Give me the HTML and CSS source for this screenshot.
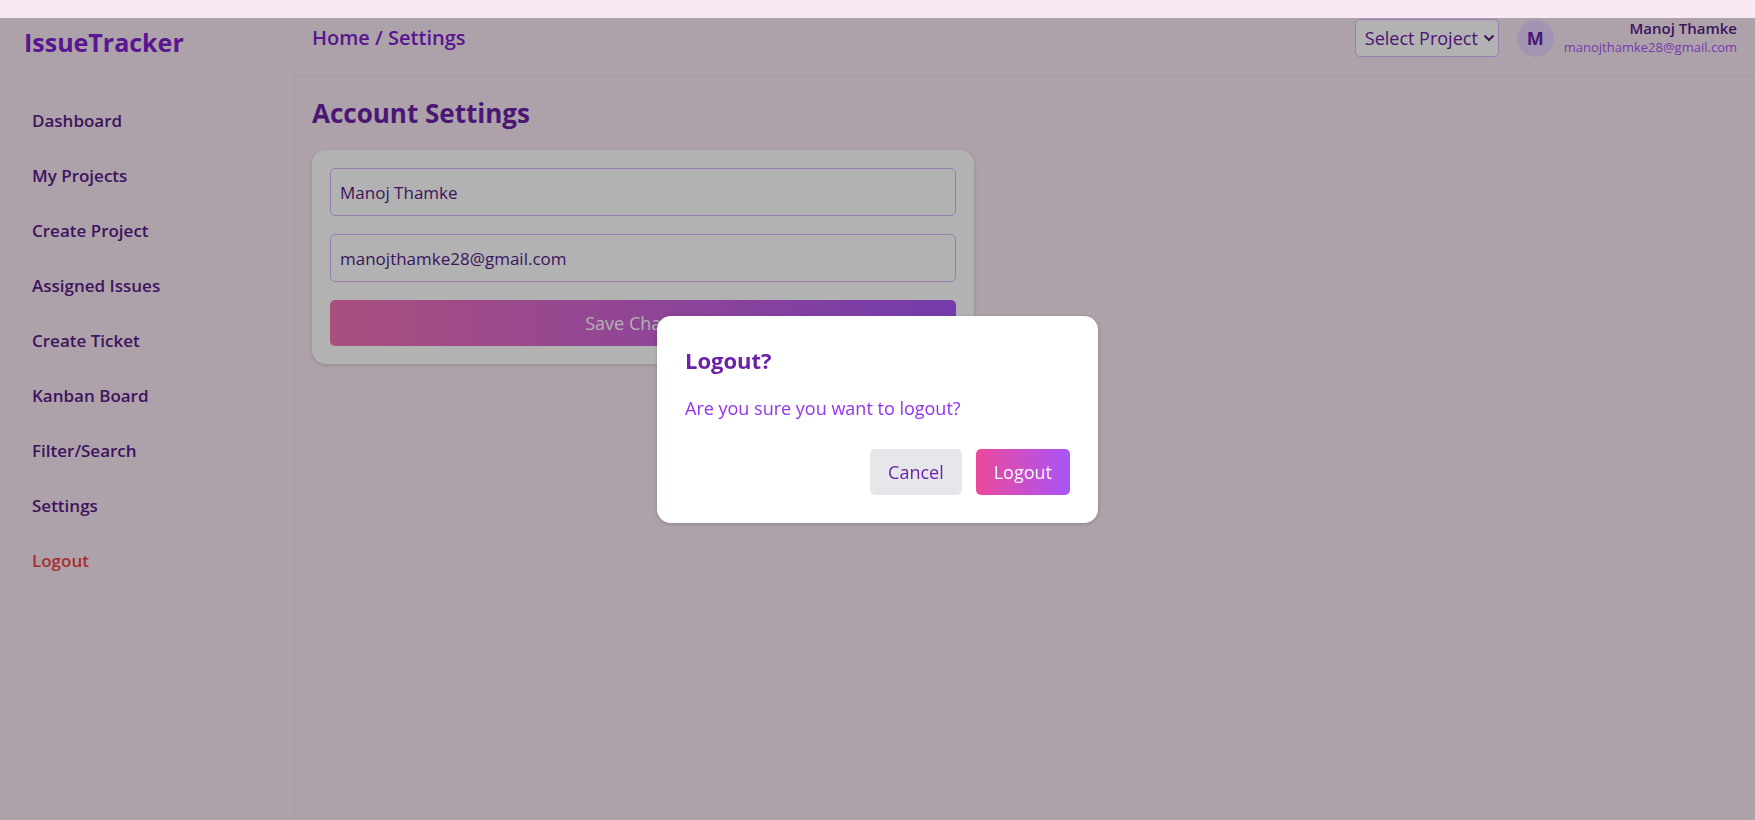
FILE: index.html
```html
<!DOCTYPE html>
<html lang="en">
<head>
<meta charset="utf-8">
<meta name="viewport" content="width=device-width, initial-scale=1">
<title>IssueTracker - Settings</title>
<link rel="stylesheet" href="styles.css">
</head>
<body>
<div class="app">
  <aside class="sidebar">
    <div class="brand">IssueTracker</div>
    <nav class="nav">
      <a href="#">Dashboard</a>
      <a href="#">My Projects</a>
      <a href="#">Create Project</a>
      <a href="#">Assigned Issues</a>
      <a href="#">Create Ticket</a>
      <a href="#">Kanban Board</a>
      <a href="#">Filter/Search</a>
      <a href="#">Settings</a>
      <button type="button" class="nav-logout">Logout</button>
    </nav>
  </aside>
  <div class="content">
    <header class="topbar">
      <div class="breadcrumb">Home / Settings</div>
      <div class="topbar-right">
        <div class="select-wrap">
          <select class="project-select" aria-label="Select Project">
            <option>Select Project</option>
          </select>
          <svg class="select-arrow" viewBox="0 0 12 8" aria-hidden="true"><path d="M1.500 1.500 6 6l4.500-4.500" fill="none" stroke="currentColor" stroke-width="2"/></svg>
        </div>
        <div class="user">
          <div class="avatar">M</div>
          <div class="user-text">
            <div class="user-name">Manoj Thamke</div>
            <div class="user-email">manojthamke28@gmail.com</div>
          </div>
        </div>
      </div>
    </header>
    <main class="main">
      <h1 class="page-title">Account Settings</h1>
      <form class="card">
        <input class="field" type="text" aria-label="Name" value="Manoj Thamke">
        <input class="field" type="email" aria-label="Email" value="manojthamke28@gmail.com">
        <button class="save" type="button">Save Changes</button>
      </form>
    </main>
  </div>
</div>
<div class="overlay">
  <div class="modal" role="dialog" aria-modal="true" aria-labelledby="logout-title">
    <h2 class="modal-title" id="logout-title">Logout?</h2>
    <p class="modal-text">Are you sure you want to logout?</p>
    <div class="modal-actions">
      <button type="button" class="btn btn-cancel">Cancel</button>
      <button type="button" class="btn btn-logout">Logout</button>
    </div>
  </div>
</div>
</body>
</html>
```
FILE: styles.css
```css
* {
  box-sizing: border-box;
  margin: 0;
}

body {
  padding-top: 18px;
  background: #fae8f4;
  color: #581c87;
  font-family: "Segoe UI", "Open Sans", "Noto Sans", sans-serif;
  font-size: 18px;
  line-height: 28px;
}

button,
input,
select {
  font: inherit;
}

.app {
  display: flex;
  min-height: calc(100vh - 18px);
}

.sidebar {
  flex: none;
  width: 294px;
  padding: 5px 14px 24px;
}

.brand {
  padding: 0 10px;
  margin-bottom: 37px;
  color: #7e22ce;
  font-size: 25px;
  font-weight: 700;
  line-height: 38px;
}

.nav {
  display: flex;
  flex-direction: column;
  gap: 9px;
}

.nav a,
.nav-logout {
  padding: 9px 18px;
  border: 0;
  background: none;
  color: #581c87;
  font-size: 17px;
  font-weight: 600;
  text-align: left;
  text-decoration: none;
}

.nav .nav-logout {
  color: #ef4444;
}

.content {
  display: flex;
  flex: 1;
  flex-direction: column;
  min-width: 0;
}

.topbar {
  display: flex;
  align-items: center;
  justify-content: space-between;
  padding: 1px 18px 18px;
  border-bottom: 1px solid #ecdbe8;
}

.breadcrumb {
  color: #7e22ce;
  font-size: 20px;
  font-weight: 600;
}

.topbar-right,
.user {
  display: flex;
  align-items: center;
}

.topbar-right {
  gap: 18px;
}

.user {
  gap: 10px;
}

.select-wrap {
  position: relative;
}

.project-select {
  appearance: none;
  display: block;
  width: 144px;
  height: 38px;
  padding: 0 9px;
  border: 1px solid #d8b4fe;
  border-radius: 5px;
  background: #fff;
  color: #6b21a8;
}

.select-arrow {
  position: absolute;
  top: 15px;
  right: 4px;
  width: 12px;
  height: 8px;
  color: #581c87;
  pointer-events: none;
}

.avatar {
  display: flex;
  align-items: center;
  justify-content: center;
  width: 37px;
  height: 37px;
  border-radius: 50%;
  background: #e9d5ff;
  color: #6b21a8;
  font-weight: 700;
}

.user-text {
  text-align: right;
}

.user-name {
  font-size: 15px;
  font-weight: 600;
  line-height: 19px;
}

.user-email {
  color: #a855f7;
  font-size: 13px;
  line-height: 19px;
}

.main {
  flex: 1;
  padding: 18px 17px;
  border-left: 1px solid #ecdbe8;
}

.page-title {
  margin-bottom: 18px;
  color: #6b21a8;
  font-size: 26px;
  font-weight: 700;
  line-height: 38px;
}

.card {
  display: flex;
  flex-direction: column;
  gap: 18px;
  max-width: 662px;
  padding: 18px;
  border-radius: 14px;
  background: #fff;
  box-shadow: 0 1px 4px rgba(0, 0, 0, 0.16);
}

.field {
  width: 100%;
  height: 48px;
  padding: 9px;
  border: 1px solid #d8b4fe;
  border-radius: 5px;
  background: #fff;
  color: #581c87;
  font-size: 17px;
}

.save,
.btn {
  padding: 9px 18px;
  border: 0;
  border-radius: 5px;
  color: #fff;
}

.save {
  background: linear-gradient(to right, #f472b6, #a855f7);
}

.overlay {
  position: fixed;
  inset: 18px 0 0;
  display: flex;
  align-items: center;
  justify-content: center;
  padding-top: 1px;
  background: rgba(0, 0, 0, 0.3);
}

.modal {
  width: 441px;
  padding: 28px;
  border-radius: 14px;
  background: #fff;
  box-shadow: 0 1px 4px rgba(0, 0, 0, 0.2);
}

.modal-title {
  margin-bottom: 18px;
  color: #6b21a8;
  font-size: 22px;
  font-weight: 700;
  line-height: 32px;
}

.modal-text {
  margin-bottom: 27px;
  color: #9333ea;
}

.modal-actions {
  display: flex;
  justify-content: flex-end;
  gap: 14px;
}

.btn-cancel {
  background: #e5e7eb;
  color: #6b21a8;
}

.btn-logout {
  background: linear-gradient(to right, #ec4899, #a855f7);
}
```
